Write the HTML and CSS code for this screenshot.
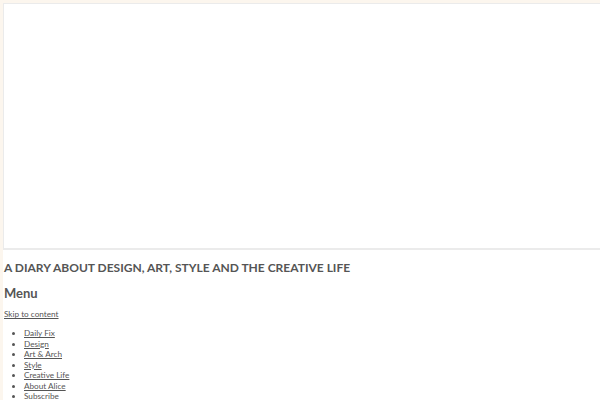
FILE: index.html
```html
<!DOCTYPE html>
<html>
<head>
<meta charset="utf-8">
<link rel="stylesheet" href="styles.css">
</head>
<body>
<div class="page">
  <div class="banner"></div>
  <p class="tagline">A DIARY ABOUT DESIGN, ART, STYLE AND THE CREATIVE LIFE</p>
  <h2 class="menu-title">Menu</h2>
  <a class="skip" href="#content">Skip to content</a>
  <ul class="nav">
    <li><a href="#">Daily Fix</a></li>
    <li><a href="#">Design</a></li>
    <li><a href="#">Art &amp; Arch</a></li>
    <li><a href="#">Style</a></li>
    <li><a href="#">Creative Life</a></li>
    <li><a href="#">About Alice</a></li>
    <li><a href="#">Subscribe</a></li>
  </ul>
</div>
</body>
</html>
```
FILE: styles.css
```css
html, body {
  margin: 0;
  padding: 0;
  background: #fff;
}
body {
  border-top: 3px solid #fcf6ee;
  border-left: 3px solid #fcf6ee;
  height: 397px;
  overflow: hidden;
  font-family: "Lato", "Liberation Sans", sans-serif;
  color: #555;
}
.banner {
  height: 244px;
  border-style: solid;
  border-color: #ebebeb;
  border-width: 1px 0 2px 1px;
}
.tagline {
  margin: 10px 0 0 1px;
  font-size: 12px;
  font-weight: 700;
  line-height: 16px;
  color: #555;
}
.menu-title {
  margin: 9px 0 0 1px;
  font-size: 13px;
  font-weight: 700;
  line-height: 16px;
  color: #555;
}
.skip {
  display: block;
  margin: 8px 0 0 1px;
  font-size: 8.2px;
  line-height: 11px;
  color: #555;
}
.nav {
  margin: 8px 0 0 0;
  padding-left: 21px;
  font-size: 8.2px;
  line-height: 10.5px;
}
.nav a {
  color: #555;
}
```
